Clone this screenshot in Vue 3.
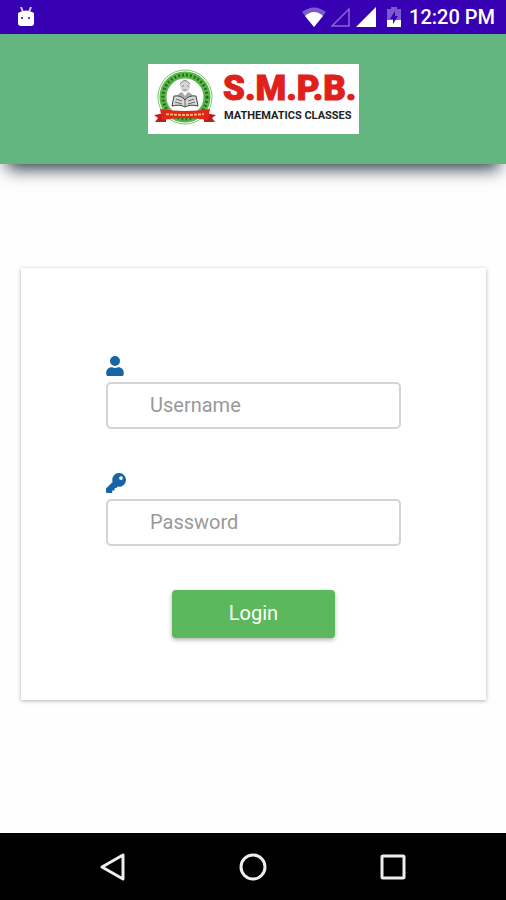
<script setup>
import { ref } from 'vue'

const username = ref('')
const password = ref('')

function login() {
  if (!username.value || !password.value) return
  password.value = ''
}
</script>

<template>
  <div class="screen">
    <div class="status-bar">
      <svg class="droid" width="18" height="20" viewBox="0 0 18 20" aria-hidden="true">
        <path d="M4 0 L6 5 M14 0 L12 5" stroke="#fff" stroke-opacity="0.8" stroke-width="2" />
        <path d="M3 5 Q9 2 15 5 L17 6 V16 Q17 19 14 19 H4 Q1 19 1 16 V6 Z" fill="#fff" />
        <circle cx="5" cy="11" r="1" fill="#3700b3" />
        <circle cx="12" cy="11" r="1" fill="#3700b3" />
      </svg>
      <div class="status-right">
        <svg width="24" height="20" viewBox="0 0 24 20" aria-hidden="true">
          <path d="M12 20 L0 5 Q12 -4 24 5 Z" fill="#fff" opacity="0.35" />
          <path d="M12 20 L3 9 Q12 1 21 9 Z" fill="#fff" />
        </svg>
        <svg width="20" height="20" viewBox="0 0 20 20" aria-hidden="true">
          <path d="M1 19 L18 2 V19 Z" fill="none" stroke="#fff" stroke-width="1.5" opacity="0.4" />
        </svg>
        <svg width="20" height="20" viewBox="0 0 20 20" aria-hidden="true">
          <path d="M0 20 L20 0 V20 Z" fill="#fff" />
        </svg>
        <svg class="battery" width="14" height="20" viewBox="0 0 14 20" aria-hidden="true">
          <path d="M0 2 H4 V0 H10 V2 H14 V20 H0 Z" fill="#fff" opacity="0.35" />
          <path d="M0 13 H14 V20 H0 Z" fill="#fff" />
          <path d="M8 4 L3 12 H6 V17 L11 9 H8 Z" fill="#3700b3" />
        </svg>
        <span class="clock">12:20 PM</span>
      </div>
    </div>

    <header class="header">
      <svg class="logo" width="211" height="70" viewBox="0 0 211 70" role="img" aria-label="S.M.P.B. Mathematics Classes">
        <rect width="211" height="70" fill="#fff" />
        <!-- round seal -->
        <circle cx="37" cy="33" r="27" fill="#fff" stroke="#79c96b" stroke-width="1" />
        <circle cx="37" cy="33" r="22" fill="none" stroke="#58b846" stroke-width="7" />
        <circle cx="37" cy="33" r="22" fill="none" stroke="#246b2c" stroke-width="3" stroke-dasharray="2 2" />
        <circle cx="37" cy="33" r="18" fill="#fff" />
        <!-- portrait and book -->
        <ellipse cx="37" cy="22" rx="5" ry="6" fill="#d5d5d5" />
        <path d="M32 20 Q37 13 42 20 M34 22 H36 M39 22 H41 M35 26 H39" fill="none" stroke="#888" />
        <path d="M28 36 Q29 29 34 28 L37 32 L40 28 Q45 29 46 36 Z" fill="#a8a8a8" />
        <path d="M26 32 Q33 31 37 36 Q41 31 48 32 L50 42 Q42 40 37 43 Q32 40 24 42 Z" fill="#d8d8d8" stroke="#444" />
        <path d="M37 36 V43 M28 35 L34 37 M40 37 L46 35 M27 38 L34 40 M40 40 L47 38" stroke="#666" />
        <!-- ribbon -->
        <path d="M6 51 L18 49 V58 L7 58 L10 54 Z M68 51 L56 49 V58 L67 58 L64 54 Z" fill="#b8201e" />
        <path d="M12 45 Q37 49 62 45 L60 56 Q37 52 14 56 Z" fill="#e2251b" />
        <path d="M18 50 Q37 52 56 50" fill="none" stroke="#ffb36b" stroke-width="2" stroke-dasharray="3 1" />
        <text class="brand" x="75" y="36">S.M.P.B.</text>
        <text class="tagline" x="76" y="55">MATHEMATICS CLASSES</text>
      </svg>
    </header>

    <main class="content">
      <form class="card" @submit.prevent="login">
        <div class="field">
          <label for="username" aria-label="Username">
            <svg width="18" height="20" viewBox="0 0 448 512" aria-hidden="true">
              <path d="M224 256a128 128 0 1 0 0-256 128 128 0 0 0 0 256zm90 32h-17a174 174 0 0 1-146 0h-17C60 288 0 348 0 422v42c0 27 21 48 48 48h352c27 0 48-21 48-48v-42c0-74-60-134-134-134z" />
            </svg>
          </label>
          <input id="username" v-model="username" type="text" placeholder="Username" autocomplete="username">
        </div>
        <div class="field">
          <label for="password" aria-label="Password">
            <svg width="20" height="20" viewBox="0 0 512 512" aria-hidden="true">
              <path d="M512 176A176 176 0 0 1 299 348l-24 27a24 24 0 0 1-18 9h-33v40a24 24 0 0 1-24 24h-40v40a24 24 0 0 1-24 24H24a24 24 0 0 1-24-24v-78c0-6 3-13 7-17l162-162A176 176 0 1 1 512 176zM336 128a48 48 0 1 0 96 0 48 48 0 0 0-96 0z" />
            </svg>
          </label>
          <input id="password" v-model="password" type="password" placeholder="Password" autocomplete="current-password">
        </div>
        <button class="login" type="submit">Login</button>
      </form>
    </main>

    <nav class="nav-bar">
      <button type="button" aria-label="Back">
        <svg width="28" height="28" viewBox="0 0 28 28">
          <path d="M3 14 L24 2 V26 Z" />
        </svg>
      </button>
      <button type="button" aria-label="Home">
        <svg width="28" height="28" viewBox="0 0 28 28">
          <circle cx="14" cy="14" r="12" />
        </svg>
      </button>
      <button type="button" aria-label="Recent apps">
        <svg width="28" height="28" viewBox="0 0 28 28">
          <rect x="3" y="3" width="22" height="22" rx="1" />
        </svg>
      </button>
    </nav>
  </div>
</template>

<style>
body {
  margin: 0;
  background: #fefefe;
}
</style>

<style scoped>
.screen {
  display: flex;
  flex-direction: column;
  min-height: 100vh;
  font-family: Roboto, 'Liberation Sans', sans-serif;
}

.status-bar {
  display: flex;
  align-items: center;
  justify-content: space-between;
  height: 34px;
  padding: 0 11px 0 17px;
  background: #3700b3;
  color: #fff;
}

.status-right {
  display: flex;
  align-items: center;
  gap: 5px;
}

.battery {
  margin: 0 3px 0 6px;
}

.clock {
  font-size: 20px;
  font-weight: 500;
  line-height: 24px;
}

.header {
  display: flex;
  align-items: center;
  justify-content: center;
  height: 130px;
  background: #64b680;
  box-shadow: 0 12px 16px -7px #2c3b46;
}

.brand {
  font-size: 35px;
  font-weight: 900;
  fill: #e0201b;
  stroke: #e0201b;
  stroke-width: 1px;
}

.tagline {
  font-size: 11px;
  font-weight: 700;
  fill: #222;
}

.content {
  flex: 1;
  padding: 104px 20px 40px 21px;
}

.card {
  display: flex;
  flex-direction: column;
  gap: 44px;
  padding: 88px 85px 62px;
  background: #fff;
  box-shadow: 0 1px 4px rgba(0, 0, 0, 0.3);
}

.field {
  display: flex;
  flex-direction: column;
  gap: 6px;
}

.field label {
  display: flex;
  height: 20px;
  fill: #1765a5;
}

.field input {
  box-sizing: border-box;
  width: 100%;
  height: 47px;
  padding: 0 42px 2px;
  border: 2px solid #d4d4d4;
  border-radius: 5px;
  background: #fff;
  color: #444;
  font-family: inherit;
  font-size: 20px;
}

.field input::placeholder {
  color: #999;
  opacity: 1;
}

.login {
  align-self: center;
  width: 163px;
  height: 48px;
  padding: 0 0 2px;
  border: 0;
  border-radius: 4px;
  background: #5cb85c;
  box-shadow: 0 2px 4px rgba(0, 0, 0, 0.3);
  color: #fff;
  font-family: inherit;
  font-size: 20px;
}

.nav-bar {
  display: flex;
  align-items: center;
  justify-content: center;
  gap: 112px;
  height: 67px;
  background: #000;
}

.nav-bar button {
  display: flex;
  padding: 0;
  border: 0;
  background: none;
}

.nav-bar svg {
  fill: none;
  stroke: #eee;
  stroke-width: 3px;
  stroke-linejoin: round;
}
</style>
